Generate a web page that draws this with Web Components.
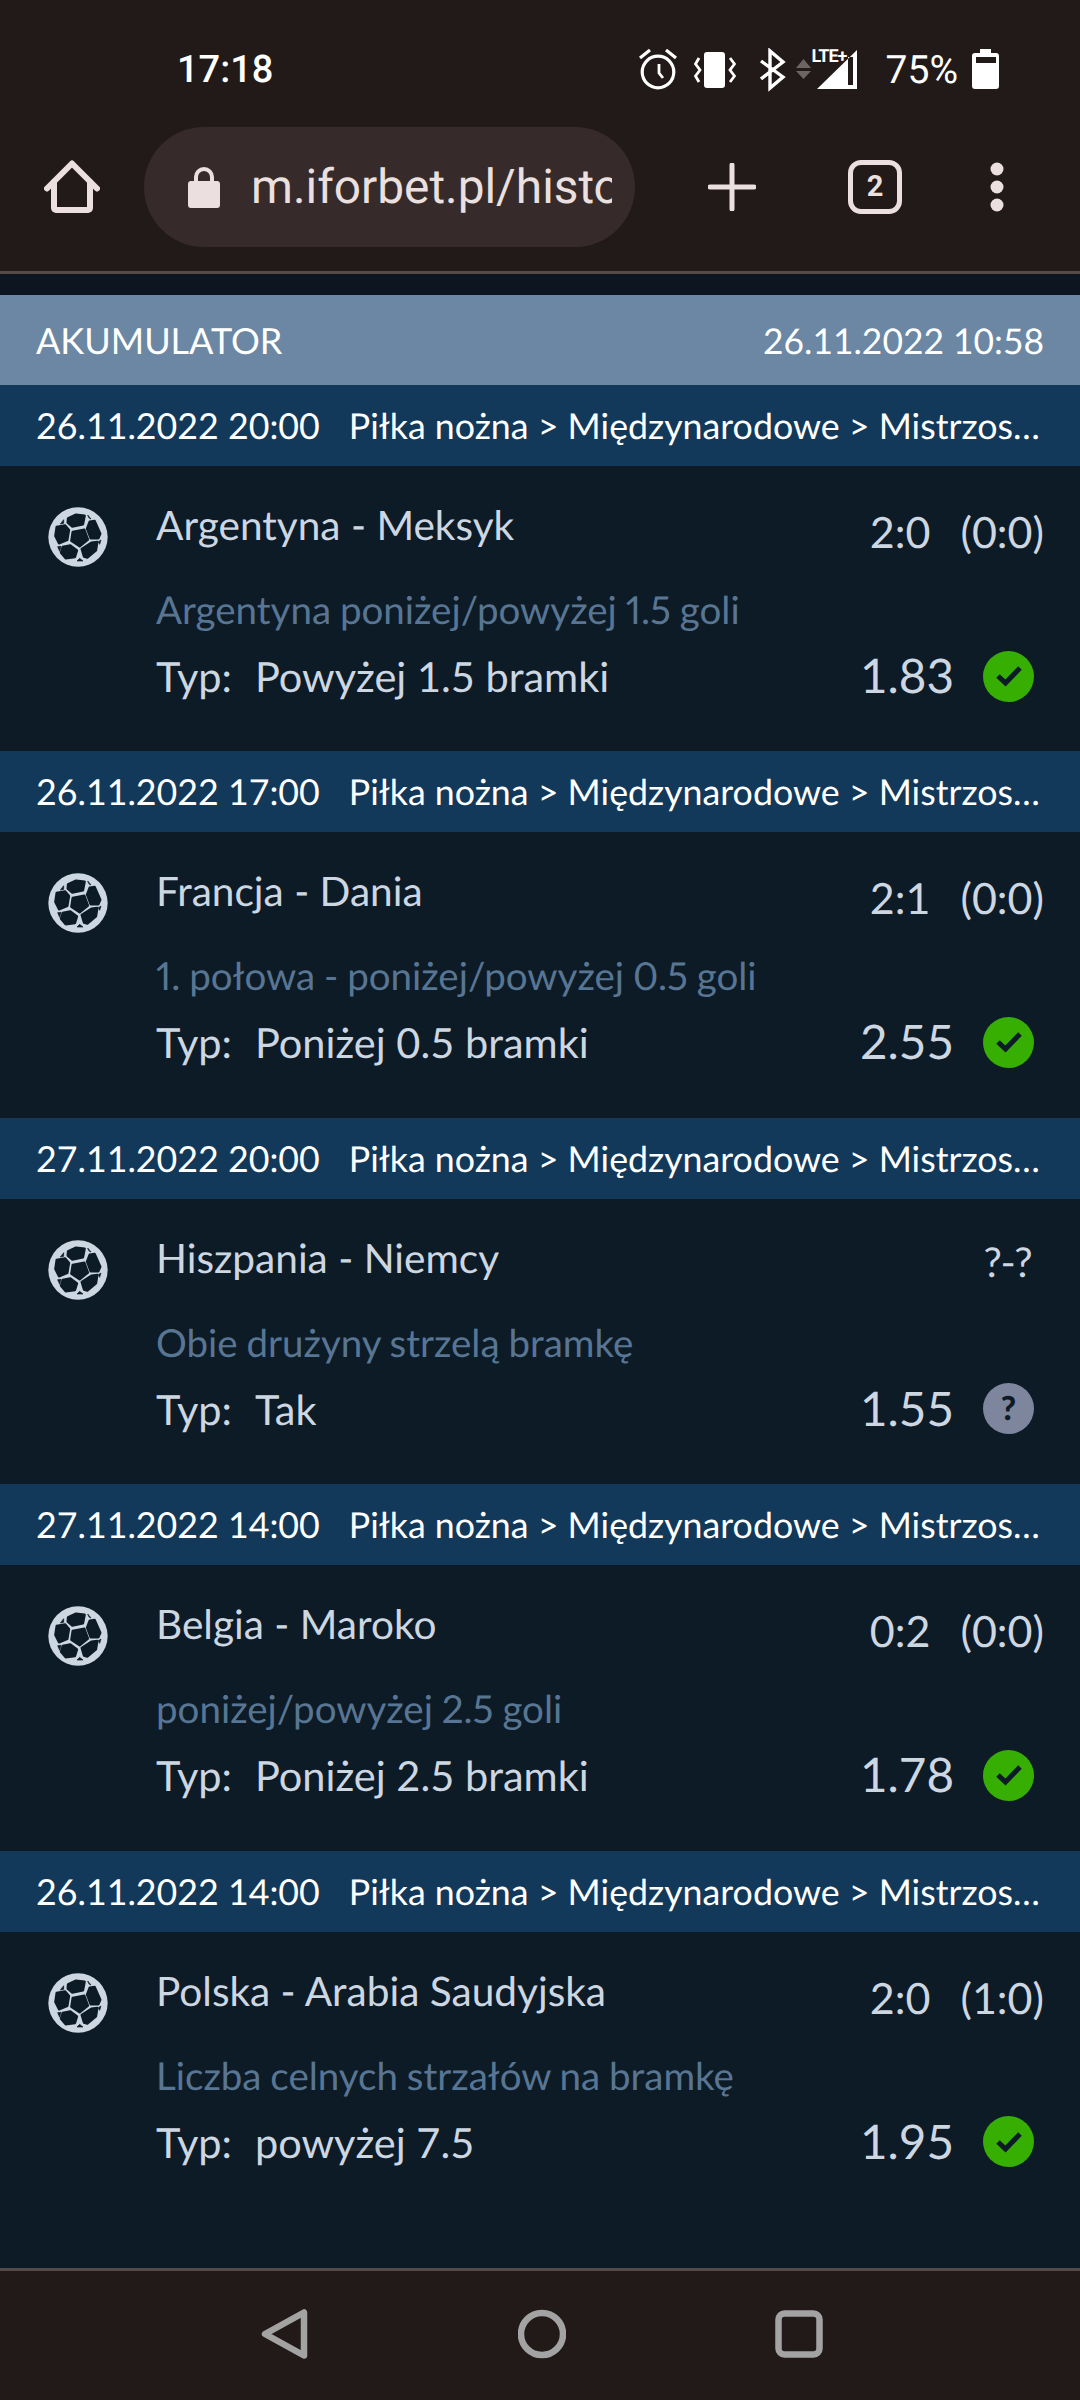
<!DOCTYPE html>
<html lang="pl">
<head>
<meta charset="utf-8">
<title>Akumulator</title>
<style>
  html, body { margin: 0; padding: 0; background: #0d1b27; }
</style>
</head>
<body>
<bet-app>
  <status-bar slot="status" time="17:18" battery="75%"></status-bar>
  <browser-toolbar slot="toolbar" url="m.iforbet.pl/histo" tabs="2"></browser-toolbar>
  <slip-header slot="content" date="26.11.2022 10:58">AKUMULATOR</slip-header>

  <bet-item slot="content" date="26.11.2022 20:00" teams="Argentyna - Meksyk" score="2:0" half="(0:0)"
    market="Argentyna poniżej/powyżej 1.5 goli" pick="Powyżej 1.5 bramki" odds="1.83" result="won"></bet-item>
  <bet-item slot="content" date="26.11.2022 17:00" teams="Francja - Dania" score="2:1" half="(0:0)"
    market="1. połowa - poniżej/powyżej 0.5 goli" pick="Poniżej 0.5 bramki" odds="2.55" result="won"></bet-item>
  <bet-item slot="content" date="27.11.2022 20:00" teams="Hiszpania - Niemcy" score="?-?"
    market="Obie drużyny strzelą bramkę" pick="Tak" odds="1.55" result="open"></bet-item>
  <bet-item slot="content" date="27.11.2022 14:00" teams="Belgia - Maroko" score="0:2" half="(0:0)"
    market="poniżej/powyżej 2.5 goli" pick="Poniżej 2.5 bramki" odds="1.78" result="won"></bet-item>
  <bet-item slot="content" date="26.11.2022 14:00" teams="Polska - Arabia Saudyjska" score="2:0" half="(1:0)"
    market="Liczba celnych strzałów na bramkę" pick="powyżej 7.5" odds="1.95" result="won"></bet-item>

  <nav-bar slot="nav"></nav-bar>
</bet-app>

<script>
class BetApp extends HTMLElement {
  connectedCallback() {
    this.attachShadow({ mode: 'open' });
    this.shadowRoot.innerHTML = `
      <style>
        :host { display: flex; flex-direction: column; width: 1080px; height: 2400px; overflow: hidden; background: #0d1b27; text-rendering: geometricPrecision; }
        .chrome { background: #211a18; border-bottom: 3px solid #544a48; }
        .content { flex: 1; padding-top: 21px; display: flex; flex-direction: column; background: linear-gradient(#0c1520 21px, #0d1b27 21px); }
      </style>
      <div class="chrome">
        <slot name="status"></slot>
        <slot name="toolbar"></slot>
      </div>
      <div class="content"><slot name="content"></slot></div>
      <slot name="nav"></slot>
    `;
  }
}

class StatusBar extends HTMLElement {
  connectedCallback() {
    this.attachShadow({ mode: 'open' });
    this.shadowRoot.innerHTML = `
      <style>
        :host { display: flex; align-items: center; height: 127px; padding: 13px 81px 0 177px; box-sizing: border-box; color: #fff; font: 400 39px Roboto, sans-serif; }
        .time { flex: 1; font-weight: 500; font-size: 38px; }
        .icons { display: flex; align-items: center; height: 44px; }
        svg { display: block; flex: none; }
        .signal { position: relative; width: 62px; height: 44px; margin-left: 10px; }
        .signal svg { position: absolute; left: 0; top: 0; }
        .lte { position: absolute; left: 16px; top: 0; font: 700 18px/18px Roboto, sans-serif; letter-spacing: -1px; }
        .pct { margin: 0 14px 0 28px; }
      </style>
      <span class="time">${this.getAttribute('time')}</span>
      <div class="icons">
        <svg width="38" height="44" viewBox="0 0 38 44" fill="none" stroke="#fff" stroke-width="3.2">
          <circle cx="19" cy="24" r="15.800"/>
          <path d="M20 16V25L24 30" stroke-width="2.800"/>
          <path d="M1 10 11 2M27 2 37 10" stroke-width="3.200"/>
        </svg>
        <svg width="42" height="44" viewBox="0 0 42 44" style="margin-left:17px" fill="none" stroke="#fff" stroke-width="2.800">
          <rect x="10" y="4" width="21" height="36" rx="3" fill="#fff" stroke="none"/>
          <path d="M5 10 1.500 16 6 22 1.500 28 5 34M36 10 40.500 16 36 22 40.500 28 36 34"/>
        </svg>
        <svg width="26" height="44" viewBox="0 0 26 44" style="margin-left:24px" fill="none" stroke="#fff" stroke-width="3.400">
          <path d="M1 13 23 29 10 40V3L23 14 1 31"/>
        </svg>
        <div class="signal">
          <svg width="62" height="44" viewBox="0 0 62 44">
            <path d="M0 20 7.500 11 15 20zM0 23H15L7.500 31z" fill="#6b6563"/>
            <path fill-rule="evenodd" d="M21 41 61 2V41zM52 9V37H57V9z" fill="#fff"/>
          </svg>
          <span class="lte">LTE+</span>
        </div>
        <span class="pct">${this.getAttribute('battery')}</span>
        <svg width="27" height="42" viewBox="0 0 27 42">
          <path fill="#fff" fill-rule="evenodd" d="M8 0H19V4H24a3 3 0 0 1 3 3V37a3 3 0 0 1-3 3H3a3 3 0 0 1-3-3V7a3 3 0 0 1 3-3H8zM4 8V14H24V8z"/>
        </svg>
      </div>
    `;
  }
}

class BrowserToolbar extends HTMLElement {
  connectedCallback() {
    this.attachShadow({ mode: 'open' });
    this.shadowRoot.innerHTML = `
      <style>
        :host { display: flex; align-items: center; height: 144px; padding: 0 0 24px 0; box-sizing: border-box; color: #ebe0df; font-family: Roboto, sans-serif; }
        svg { display: block; flex: none; }
        .home { margin-left: 44px; }
        .pill { width: 491px; height: 120px; margin-left: 44px; border-radius: 60px; background: #362b2a; display: flex; align-items: center; box-sizing: border-box; padding-left: 44px; }
        .url { width: 361px; margin-left: 31px; overflow: hidden; white-space: nowrap; font-size: 47.8px; line-height: 60px; }
        .plus { margin-left: 73px; }
        .tabs { width: 54px; height: 54px; margin-left: 92px; box-sizing: border-box; border: 5px solid #ebe0df; border-radius: 13px; display: flex; align-items: center; justify-content: center; font: 700 29px/1 Roboto, sans-serif; }
        .more { margin-left: 88px; }
      </style>
      <svg class="home" width="56" height="56" viewBox="0 0 56 56" fill="none" stroke="#ebe0df" stroke-width="6" stroke-linecap="round" stroke-linejoin="round">
        <path d="M3 29.500 28 4.500 53 29.500"/>
        <path d="M10 23V49a2 2 0 0 0 2 2H44a2 2 0 0 0 2-2V23"/>
      </svg>
      <div class="pill">
        <svg width="32" height="42" viewBox="0 0 32 42">
          <path fill="#ebe0df" fill-rule="evenodd" d="M6 15V11a10 10 0 0 1 20 0v4h3a3 3 0 0 1 3 3v21a3 3 0 0 1-3 3H3a3 3 0 0 1-3-3V18a3 3 0 0 1 3-3zM10 15H22V11a6 6 0 0 0-12 0z"/>
        </svg>
        <div class="url">${this.getAttribute('url')}</div>
      </div>
      <svg class="plus" width="48" height="48" viewBox="0 0 48 48" stroke="#ebe0df" stroke-width="5" stroke-linecap="round">
        <path d="M24 2V46M2 24H46"/>
      </svg>
      <div class="tabs">${this.getAttribute('tabs')}</div>
      <svg class="more" width="14" height="50" viewBox="0 0 14 50" fill="#ebe0df">
        <circle cx="7" cy="7" r="6.500"/><circle cx="7" cy="25" r="6.500"/><circle cx="7" cy="43" r="6.500"/>
      </svg>
    `;
  }
}

class SlipHeader extends HTMLElement {
  connectedCallback() {
    this.attachShadow({ mode: 'open' });
    this.shadowRoot.innerHTML = `
      <style>
        :host { display: flex; justify-content: space-between; align-items: center; height: 90px; padding: 0 36px; box-sizing: border-box; background: #6b87a4; color: #fff; font: 36px Lato, sans-serif; }
        .date { font-size: 35.4px; }
      </style>
      <span><slot></slot></span>
      <span class="date">${this.getAttribute('date')}</span>
    `;
  }
}

class BallIcon extends HTMLElement {
  connectedCallback() {
    this.attachShadow({ mode: 'open' });
    this.shadowRoot.innerHTML = `
      <style>:host { display: block; width: 60px; height: 60px; } svg { display: block; }</style>
      <svg width="60" height="60" viewBox="83 53 180 180">
        <circle cx="173" cy="143" r="89" fill="#cdd7e1"/>
        <g fill="#0d1b27" stroke="#0d1b27" stroke-width="7" stroke-linejoin="round">
          <path d="M157 128 192 121 203 151 178 171 153 154z"/>
          <path d="M143 87 167 76 193 79 188 105 156 112 142 100z"/>
          <path d="M208 97 223 95 240 133 234 147 211 147 200 118z"/>
          <path d="M109 113 134 108 146 122 141 152 116 162 105 140z"/>
          <path d="M127 173 150 168 170 183 164 203 136 207 122 190z"/>
          <path d="M213 160 231 158 227 183 201 205 191 202 184 179z"/>
          <path d="M202 77 212 89 206 86z" stroke-width="2"/>
          <path d="M130 91 120 104 130 102z" stroke-width="2"/>
          <path d="M242 152 238 165 234 157z" stroke-width="2"/>
          <path d="M112 172 122 171 118 186z" stroke-width="2"/>
          <path d="M178 207 188 215 170 215z" stroke-width="2"/>
        </g>
      </svg>
    `;
  }
}

class ResultBadge extends HTMLElement {
  connectedCallback() {
    this.attachShadow({ mode: 'open' });
    const won = this.getAttribute('result') === 'won';
    this.shadowRoot.innerHTML = `
      <style>
        :host { display: flex; align-items: center; justify-content: center; width: 51px; height: 51px; border-radius: 50%; background: ${won ? '#37ae02' : '#7d869d'}; color: #0d1b27; font: 900 33px/1 Lato, sans-serif; }
        svg { display: block; }
      </style>
      ${won
        ? `<svg width="26" height="22" viewBox="0 0 26 22" fill="none" stroke="#0d1b27" stroke-width="5"><path d="M2 11 9.500 18 24 3"/></svg>`
        : `?`}
    `;
  }
}

class BetItem extends HTMLElement {
  connectedCallback() {
    this.attachShadow({ mode: 'open' });
    const a = n => this.getAttribute(n) || '';
    const half = a('half');
    this.shadowRoot.innerHTML = `
      <style>
        :host { display: block; height: 366.4px; font-family: Lato, sans-serif; color: #cdd7e1; }
        .bar { display: flex; align-items: center; height: 81px; padding: 0 36px; box-sizing: border-box; gap: 29px; background: #13395a; color: #fff; font-size: 35.75px; white-space: nowrap; }
        .body { display: grid; grid-template-columns: 120px 1fr; height: 285.4px; box-sizing: border-box; padding: 29px 36px 0 36px; background: #0d1b27; }
        ball-icon { margin: 12px 0 0 12px; }
        .head { display: flex; justify-content: space-between; height: 60px; line-height: 60px; font-size: 40.6px; }
        .score { display: flex; gap: 30px; padding-top: 8px; font-size: 43px; }
        .score.open { padding: 4px 13px 0 0; font-size: 41px; letter-spacing: -1.5px; }
        .market { margin-top: 31px; height: 48px; line-height: 48px; font-size: 38.5px; font-variant-numeric: proportional-nums; word-spacing: -1px; color: #587693; white-space: nowrap; }
        .row { display: flex; align-items: center; height: 60px; margin-top: 12px; font-size: 41.5px; line-height: 60px; }
        .typ { width: 99px; }
        .pick { flex: 1; }
        .odds { font-size: 47.6px; margin-right: 29px; }
        result-badge { margin-right: 10px; }
      </style>
      <div class="bar">
        <span>${a('date')}</span>
        <span>Piłka nożna &gt; Międzynarodowe &gt; Mistrzos…</span>
      </div>
      <div class="body">
        <ball-icon></ball-icon>
        <div>
          <div class="head">
            <span>${a('teams')}</span>
            <span class="score${half ? '' : ' open'}"><span>${a('score')}</span>${half ? `<span>${half}</span>` : ''}</span>
          </div>
          <div class="market">${a('market')}</div>
          <div class="row">
            <span class="typ">Typ:</span>
            <span class="pick">${a('pick')}</span>
            <span class="odds">${a('odds')}</span>
            <result-badge result="${a('result')}"></result-badge>
          </div>
        </div>
      </div>
    `;
  }
}

class NavBar extends HTMLElement {
  connectedCallback() {
    this.attachShadow({ mode: 'open' });
    this.shadowRoot.innerHTML = `
      <style>
        :host { display: flex; justify-content: center; align-items: center; gap: 209px; height: 132px; box-sizing: border-box; padding: 0 0 4px 3px; background: #221a18; border-top: 3px solid #544a48; }
        svg { display: block; }
      </style>
      <svg width="48" height="50" viewBox="0 0 48 50" fill="none" stroke="#a3a3a3" stroke-width="6.500" stroke-linejoin="round">
        <path d="M4 25 43 3.500V46.500z"/>
      </svg>
      <svg width="48" height="50" viewBox="0 0 48 50" fill="none" stroke="#a3a3a3" stroke-width="6.500">
        <circle cx="24" cy="25" r="21"/>
      </svg>
      <svg width="48" height="50" viewBox="0 0 48 50" fill="none" stroke="#a3a3a3" stroke-width="6.500">
        <rect x="3.500" y="4.500" width="41" height="41" rx="6"/>
      </svg>
    `;
  }
}

customElements.define('bet-app', BetApp);
customElements.define('status-bar', StatusBar);
customElements.define('browser-toolbar', BrowserToolbar);
customElements.define('slip-header', SlipHeader);
customElements.define('ball-icon', BallIcon);
customElements.define('result-badge', ResultBadge);
customElements.define('bet-item', BetItem);
customElements.define('nav-bar', NavBar);
</script>
</body>
</html>
